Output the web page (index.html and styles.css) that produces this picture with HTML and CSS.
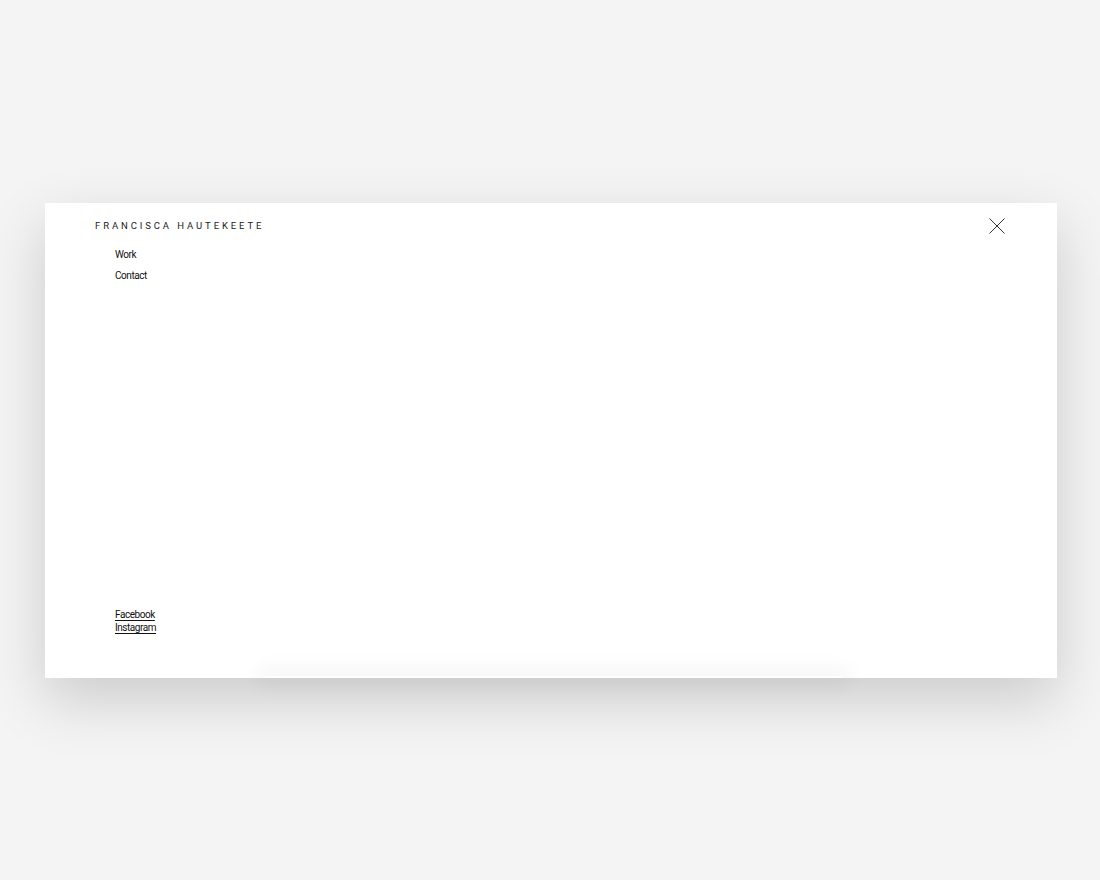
FILE: index.html
```html
<!DOCTYPE html>
<html lang="en">
<head>
<meta charset="utf-8">
<title>Francisca Hautekeete</title>
<link rel="stylesheet" href="styles.css">
</head>
<body>
<div class="stage">
  <div class="card">
    <div class="ghost"></div>
    <header class="top">
      <div class="brand">FRANCISCA HAUTEKEETE</div>
      <button class="close" aria-label="Close">
        <svg width="16" height="16" viewBox="0 0 16 16"><path d="M0.5 0.5 L15.5 15.5 M15.5 0.5 L0.5 15.5" stroke="#333" stroke-width="1" fill="none"/></svg>
      </button>
    </header>
    <nav class="menu">
      <a class="menu-item" href="#">Work</a>
      <a class="menu-item" href="#">Contact</a>
    </nav>
    <div class="social">
      <a class="social-link" href="#">Facebook</a>
      <a class="social-link" href="#">Instagram</a>
    </div>
  </div>
</div>
</body>
</html>
```
FILE: styles.css
```css
html, body {
  margin: 0;
  padding: 0;
}
body {
  background: #f4f4f4;
  font-family: Roboto, "Liberation Sans", sans-serif;
  color: #111;
}
.stage {
  padding: 203px 43px 202px 45px;
}
.card {
  position: relative;
  width: 1012px;
  height: 475px;
  box-sizing: border-box;
  background: #fff;
  box-shadow: 0 22px 55px rgba(0,0,0,0.17);
  display: flex;
  flex-direction: column;
  padding: 15px 51px 0 50px;
}
.ghost {
  position: absolute;
  left: 220px;
  right: 215px;
  bottom: 0;
  height: 2px;
  box-shadow: 0 0 22px 6px rgba(0,0,0,0.06);
}
.top {
  display: flex;
  justify-content: space-between;
  align-items: flex-start;
  position: relative;
}
.brand {
  font-size: 9.5px;
  letter-spacing: 2.9px;
  line-height: 14px;
  margin-top: 1px;
  color: #222;
}
.close {
  border: 0;
  background: none;
  padding: 0;
  width: 16px;
  height: 16px;
  margin-right: 1px;
  cursor: pointer;
}
.close svg { display: block; }
.menu {
  display: flex;
  flex-direction: column;
  padding-left: 20px;
  margin-top: 13px;
  gap: 6px;
  position: relative;
}
.menu-item {
  font-size: 10px;
  letter-spacing: -0.45px;
  line-height: 15px;
  color: #111;
  text-decoration: none;
}
.social {
  margin-top: auto;
  margin-bottom: 44px;
  padding-left: 20px;
  display: flex;
  flex-direction: column;
  align-items: flex-start;
  position: relative;
}
.social-link {
  font-size: 10px;
  letter-spacing: -0.45px;
  line-height: 13px;
  color: #111;
  text-decoration: underline;
  text-underline-offset: 2px;
}
```
